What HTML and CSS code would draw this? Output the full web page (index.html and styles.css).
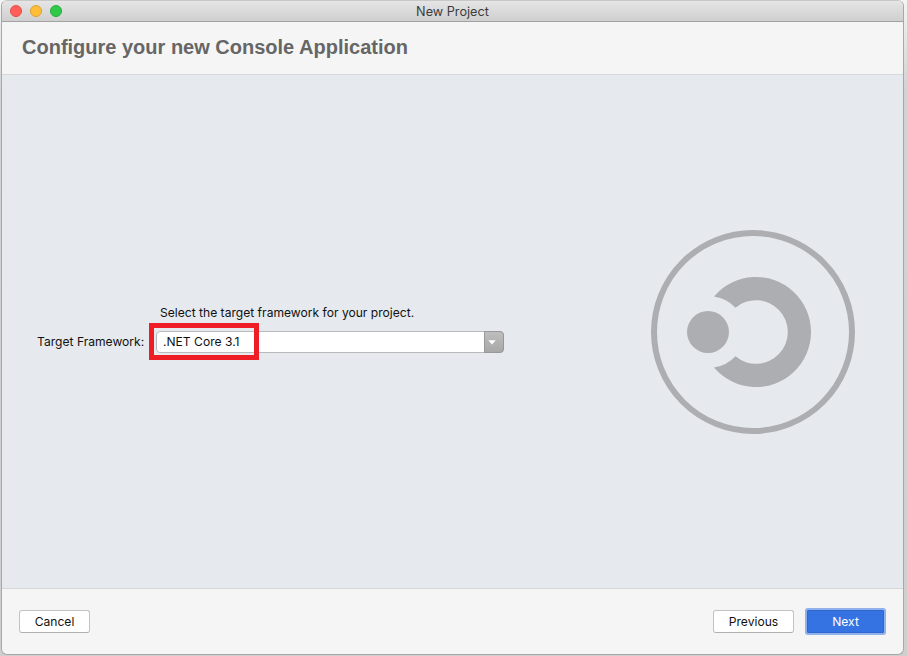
FILE: index.html
```
<!DOCTYPE html>
<html lang="en">
<head>
<meta charset="utf-8">
<title>New Project</title>
<link rel="stylesheet" href="styles.css">
</head>
<body>
<div class="window">
  <div class="titlebar">
    <div class="lights"><i class="light close"></i><i class="light minimize"></i><i class="light expand"></i></div>
    <span class="title">New Project</span>
  </div>
  <header class="header"><h1>Configure your new Console Application</h1></header>
  <main class="content">
    <form class="form">
      <p class="hint">Select the target framework for your project.</p>
      <label class="label">Target Framework:</label>
      <div class="combo">
        <span class="value">.NET Core 3.1</span>
        <span class="arrow"><svg width="8" height="5" viewBox="0 0 8 5"><path d="M0.3 0.3H7.7L4 4.6Z" fill="#fff"/></svg></span>
        <span class="highlight"></span>
      </div>
    </form>
    <svg class="logo" width="206" height="206" viewBox="10 9 206 206">
      <circle cx="113" cy="112" r="99" fill="none" stroke="#adaeb2" stroke-width="6"/>
      <circle cx="68" cy="112" r="21" fill="#adaeb2"/>
      <path d="M74 76.5A55 55 0 1 1 74 147.5A36.5 36.5 0 0 0 95.5 136.3A31.8 31.8 0 1 0 95.5 87.7A36.5 36.5 0 0 0 74 76.5Z" fill="#adaeb2"/>
    </svg>
  </main>
  <footer class="footer">
    <button class="btn cancel">Cancel</button>
    <button class="btn previous">Previous</button>
    <button class="btn next">Next</button>
  </footer>
</div>
</body>
</html>
```
FILE: styles.css
```
* { box-sizing: border-box; }
body {
  margin: 0;
  height: 656px;
  padding: 0 3px 1px 1px;
  overflow: hidden;
  background: linear-gradient(#f4f4f4, #d2d2d2 90px, #cfcfcf);
  font-family: Inter, "Liberation Sans", sans-serif;
  font-size: 12.1px;
  color: #111;
}
.window {
  height: 655px;
  display: flex;
  flex-direction: column;
  border: 1px solid #a8a8a8;
  border-top-color: #c8c8c8;
  border-radius: 6px;
  overflow: hidden;
  background: #f5f5f5;
}
.titlebar {
  height: 21px;
  flex: none;
  display: grid;
  grid-template-columns: 1fr auto 1fr;
  align-items: center;
  background: linear-gradient(#e5e5e5, #cfcfcf);
  border-bottom: 1px solid #a2a2a2;
}
.lights { display: flex; gap: 8px; padding-left: 8px; }
.light { width: 12px; height: 12px; border-radius: 50%; border: 1px solid; }
.close { background: #ff5f58; border-color: #e34c46; }
.minimize { background: #ffbe38; border-color: #dfa12d; }
.expand { background: #30c94a; border-color: #24ae3a; }
.title { padding-top: 2px; font-size: 12.7px; line-height: 18px; color: #3c3c3c; }
.header {
  height: 53px;
  flex: none;
  padding: 13px 20px 0;
  border-bottom: 1px solid #d8d9da;
}
h1 {
  margin: 0;
  font: bold 20px/24px "Liberation Sans", Arial, sans-serif;
  color: #666;
}
.content {
  height: 513px;
  flex: none;
  display: flex;
  justify-content: space-between;
  align-items: center;
  padding: 0 47px 0 35px;
  background: #e6eaee;
}
.form {
  display: grid;
  grid-template-columns: 119px 348px;
  grid-template-rows: 20px 22px;
  row-gap: 8px;
  align-items: center;
  margin-top: -8px;
}
.hint { grid-column: 2; margin: 0 0 0 4px; line-height: 20px; }
.label { line-height: 22px; }
.combo {
  position: relative;
  height: 22px;
  display: flex;
  justify-content: space-between;
  background: #fff;
  border: 1px solid #b9b9b9;
  border-radius: 4px;
}
.value { padding-left: 6px; line-height: 20px; }
.arrow {
  width: 20px;
  margin: -1px;
  display: flex;
  align-items: center;
  padding: 1px 0 0 3px;
  background: linear-gradient(#bebebe, #a8a8a8);
  border: 1px solid #989898;
  border-radius: 0 4px 4px 0;
}
.highlight {
  position: absolute;
  left: -8px;
  top: -9px;
  width: 110px;
  height: 37px;
  border: 5px solid #ee1c25;
}
.logo { flex: none; margin-top: 1px; }
.footer {
  flex: 1;
  display: flex;
  align-items: flex-start;
  padding: 21px 18px 0 17px;
  border-top: 1px solid #d5d6d7;
}
.btn {
  height: 23px;
  padding: 0;
  font: 12.1px/21px Inter, "Liberation Sans", sans-serif;
  color: #111;
  background: #fff;
  border: 1px solid #c3c3c3;
  border-bottom-color: #b0b0b0;
  border-radius: 3px;
}
.cancel { width: 71px; }
.previous { width: 81px; margin-left: auto; }
.next {
  width: 77px;
  margin: 0 1px 0 13px;
  color: #fff;
  background: #3673e2;
  border-color: #3067ca;
  border-radius: 1px;
  box-shadow: 0 0 0 2px #91b1ee;
}
```
